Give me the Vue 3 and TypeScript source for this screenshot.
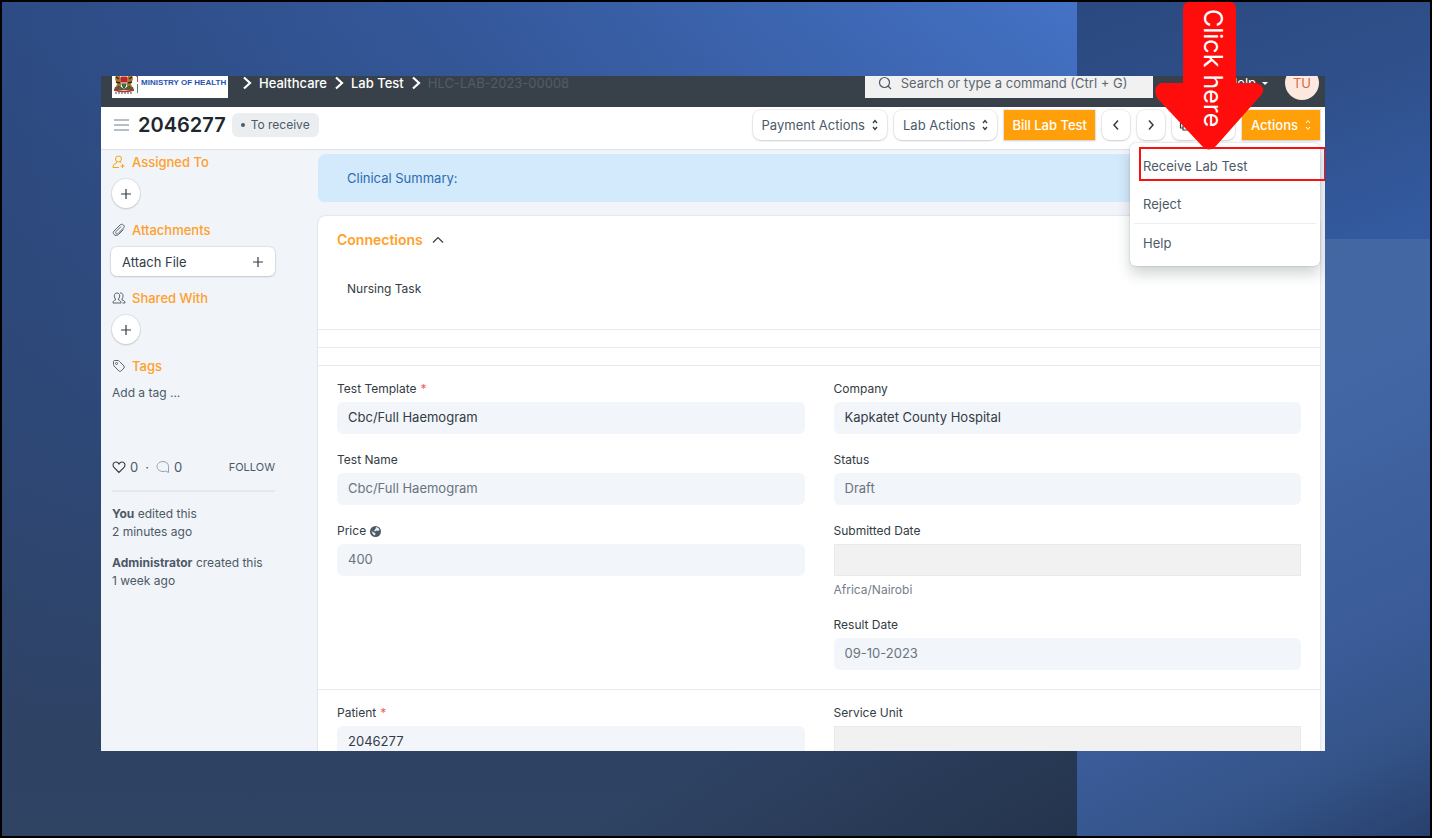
<script setup lang="ts">
import { ref } from 'vue'

interface Field {
  id: string
  label: string
  value: string
  required?: boolean
  muted?: boolean
  blank?: boolean
  globe?: boolean
  help?: string
}

const crumbs = ['Healthcare', 'Lab Test']
const menuOpen = ref(true)

const leftFields: Field[] = [
  { id: 'template', label: 'Test Template', value: 'Cbc/Full Haemogram', required: true },
  { id: 'name', label: 'Test Name', value: 'Cbc/Full Haemogram', muted: true },
  { id: 'price', label: 'Price', value: '400', muted: true, globe: true },
]
const rightFields: Field[] = [
  { id: 'company', label: 'Company', value: 'Kapkatet County Hospital' },
  { id: 'status', label: 'Status', value: 'Draft', muted: true },
  { id: 'submitted', label: 'Submitted Date', value: '', blank: true, help: 'Africa/Nairobi' },
  { id: 'result', label: 'Result Date', value: '09-10-2023', muted: true },
]
const patientFields: Field[] = [{ id: 'patient', label: 'Patient', value: '2046277', required: true }]
const unitFields: Field[] = [{ id: 'unit', label: 'Service Unit', value: '', blank: true }]

const sections: Field[][][] = [
  [leftFields, rightFields],
  [patientFields, unitFields],
]
</script>

<template>
  <div class="slide">
    <div class="panel-left"></div>
    <div class="panel-top"></div>
    <div class="panel-side"></div>

    <div class="window">
      <header class="navbar">
        <div class="nav-inner">
          <a class="brand" href="#">
            <svg class="crest" width="27" height="34" viewBox="0 0 27 34" aria-hidden="true">
              <path d="M4 12 L7 9 L8 14 L10 18 L9 24 L6 28 L3 28 L5 22 L3 17 Z" fill="#a87a35" />
              <path d="M20 12 L17 9 L16 14 L14 18 L15 24 L18 28 L21 28 L19 22 L21 17 Z" fill="#a87a35" />
              <path d="M4 15 L7 17 M4 20 L8 21 M6 24 L8 26 M20 15 L17 17 M20 20 L16 21 M18 24 L16 26" stroke="#3a2413" stroke-width="1.500" />
              <path d="M12 8 C16 12 16 22 12 27 C8 22 8 12 12 8" fill="#181818" />
              <path d="M9 14 H15 V21 H9 Z" fill="#c3222b" />
              <path d="M9 14 H15 M9 21 H15" stroke="#fff" stroke-width="1" />
              <path d="M10 22 H14 L12 27 Z" fill="#2f7a3d" />
              <path d="M3 25 L8 24 L12 27 L16 24 L21 25 L22 28 H2 Z" fill="#5c5b35" />
              <path d="M2 28 Q12 31 22 28" fill="none" stroke="#b8322e" stroke-width="1.500" />
              <path d="M3 31 H21" stroke="#444" stroke-width="1" stroke-dasharray="2 1" />
              <path d="M25 4 V15" stroke="#222" stroke-width="1" />
              <path d="M25.500 13 V20" stroke="#e0383e" stroke-width="1" />
              <path d="M25.500 22 V31" stroke="#3c9a55" stroke-width="1" />
            </svg>
            <span>MINISTRY OF HEALTH</span>
          </a>
          <nav class="crumbs" aria-label="Breadcrumb">
            <template v-for="c in crumbs" :key="c">
              <svg width="10" height="14" viewBox="0 0 10 14" aria-hidden="true"><path d="M2 1.500 L8 7 L2 12.500" fill="none" stroke="#fff" stroke-width="2.200" /></svg>
              <a href="#">{{ c }}</a>
            </template>
            <svg width="10" height="14" viewBox="0 0 10 14" aria-hidden="true"><path d="M2 1.500 L8 7 L2 12.500" fill="none" stroke="#fff" stroke-width="2.200" /></svg>
            <span class="current">HLC-LAB-2023-00008</span>
          </nav>
          <label class="search">
            <svg width="14" height="14" viewBox="0 0 14 14" aria-hidden="true"><circle cx="6.500" cy="6.500" r="5" fill="none" stroke="#4c5a67" stroke-width="1.200" /><path d="M10 10 L13 13" stroke="#4c5a67" stroke-width="1.200" /></svg>
            <input type="text" placeholder="Search or type a command (Ctrl + G)" aria-label="Search or type a command" />
          </label>
          <button class="help">Help <i class="caret"></i></button>
          <span class="avatar">TU</span>
        </div>
      </header>

      <div class="page-head">
        <button class="burger" aria-label="Toggle sidebar"><i></i><i></i><i></i></button>
        <h1>2046277</h1>
        <span class="pill"><i></i>To receive</span>
        <div class="actions">
          <button v-for="b in ['Payment Actions', 'Lab Actions']" :key="b" class="btn">
            {{ b }}
            <svg width="6" height="12" viewBox="0 0 6 12" aria-hidden="true"><path d="M1 4 L3 1.500 L5 4 M1 8 L3 10.500 L5 8" fill="none" stroke="#333c44" stroke-width="1.300" /></svg>
          </button>
          <button class="btn primary">Bill Lab Test</button>
          <button class="btn icon" aria-label="Previous"><svg width="8" height="12" viewBox="0 0 8 12"><path d="M6 1.500 L2 6 L6 10.500" fill="none" stroke="#333c44" stroke-width="1.500" /></svg></button>
          <button class="btn icon" aria-label="Next"><svg width="8" height="12" viewBox="0 0 8 12"><path d="M2 1.500 L6 6 L2 10.500" fill="none" stroke="#333c44" stroke-width="1.500" /></svg></button>
          <button class="btn icon" aria-label="Print"><svg width="14" height="12" viewBox="0 0 14 12"><path d="M4 4 V1 H10 V4 M4 9 H1.500 V4.500 H12.500 V9 H10 M4 7 H10 V11 H4 Z" fill="none" stroke="#333c44" stroke-width="1.200" /></svg></button>
          <button class="btn icon" aria-label="More"><svg width="14" height="4" viewBox="0 0 14 4" fill="#333c44"><circle cx="2" cy="2" r="1" /><circle cx="7" cy="2" r="1" /><circle cx="12" cy="2" r="1" /></svg></button>
          <div class="menu-anchor">
            <button class="btn primary" aria-haspopup="menu" :aria-expanded="menuOpen" @click="menuOpen = !menuOpen">
              Actions
              <svg width="6" height="12" viewBox="0 0 6 12" aria-hidden="true"><path d="M1 4 L3 1.500 L5 4 M1 8 L3 10.500 L5 8" fill="none" stroke="#fff" stroke-width="1" /></svg>
            </button>
            <div v-if="menuOpen" class="menu">
              <button class="marked">Receive Lab Test</button>
              <button>Reject</button>
              <hr />
              <button>Help</button>
            </div>
          </div>
        </div>
      </div>

      <div class="body">
        <aside>
          <section class="side-group">
            <h2>
              <svg width="14" height="14" viewBox="0 0 14 14" fill="none" stroke="#ffa00a"><circle cx="6.500" cy="4" r="3" /><path d="M4.500 7 L4 8.500 C2 9 1 10 1 12.500 H7 M8.500 7 L9 8 M10.500 9 V13 M8.500 11 H12.500" /></svg>
              Assigned To
            </h2>
            <button class="round" aria-label="Assign"><svg width="12" height="12" viewBox="0 0 12 12"><path d="M6 1 V11 M1 6 H11" stroke="#333c44" stroke-width="1.200" /></svg></button>
          </section>
          <section class="side-group">
            <h2>
              <svg width="14" height="14" viewBox="0 0 14 14" fill="none" stroke="#5a6570"><path d="M11.500 6.500 L6.500 11.500 C5 13 3 12.500 2 11.500 C1 10.500 1 9 2 8 L8 2 C9 1 10.500 1 11.500 2 C12.500 3 12.500 4 11.500 5 L6 10.500 C5.500 11 4.500 11 4 10.500 C3.500 10 3.500 9 4 8.500 L9 3.500" /></svg>
              Attachments
            </h2>
            <button class="attach">Attach File <svg width="12" height="12" viewBox="0 0 12 12"><path d="M6 1 V11 M1 6 H11" stroke="#333c44" stroke-width="1.200" /></svg></button>
          </section>
          <section class="side-group">
            <h2>
              <svg width="14" height="14" viewBox="0 0 14 14" fill="none" stroke="#5a6570"><path d="M1 12 C1 10 2 9.500 3.500 9 V8 C1.500 5.500 2 2 5 2 C8 2 8.500 5.500 6.500 8 V9 C8 9.500 9 10 9 12 Z M8 2 C11 1.500 12 5 10 8 V9 C12 9.500 13 10 13 12 H10.500" /></svg>
              Shared With
            </h2>
            <button class="round" aria-label="Share"><svg width="12" height="12" viewBox="0 0 12 12"><path d="M6 1 V11 M1 6 H11" stroke="#333c44" stroke-width="1.200" /></svg></button>
          </section>
          <section class="side-group tags">
            <h2>
              <svg width="14" height="14" viewBox="0 0 14 14" fill="none" stroke="#5a6570"><path d="M1.500 2.500 C1.500 2 2 1.500 2.500 1.500 H6 C6.500 1.500 7 2 7.500 2.500 L12 7 C12.500 7.500 12.500 8.500 12 9 L9 12 C8.500 12.500 7.500 12.500 7 12 L2 7 C1.500 6.500 1.500 6 1.500 5.500 Z" /><circle cx="4.500" cy="4.500" r="1" /></svg>
              Tags
            </h2>
            <button class="plain">Add a tag ...</button>
          </section>
          <div class="stats">
            <svg width="14" height="14" viewBox="0 0 14 14" fill="none" stroke="#333c44" stroke-width="1.100"><path d="M7 12.500 L2 7.500 C0 5 1.500 2 4 2 C5.500 2 6.500 3 7 4 C7.500 3 8.500 2 10 2 C12.500 2 14 5 12 7.500 Z" /></svg>
            <span>0</span><span class="dot">·</span>
            <svg width="14" height="14" viewBox="0 0 14 14" fill="none" stroke="#98a1a9"><path d="M12.500 12.500 V6.500 C12.500 3.500 10 1.500 7 1.500 C4 1.500 1 3.500 1 6.500 C1 9.500 4 11.500 7 11.500 C8 11.500 9 11.500 9.500 11 Z" /></svg>
            <span>0</span>
            <button class="follow">FOLLOW</button>
          </div>
          <p><b>You</b> edited this<br />2 minutes ago</p>
          <p><b>Administrator</b> created this<br />1 week ago</p>
        </aside>

        <main>
          <div class="summary">Clinical Summary:</div>
          <div class="card">
            <section class="connections">
              <button class="section-title">
                Connections
                <svg width="12" height="8" viewBox="0 0 12 8" aria-hidden="true"><path d="M1 6.500 L6 1.500 L11 6.500" fill="none" stroke="#333c44" stroke-width="1.200" /></svg>
              </button>
              <a class="task" href="#">Nursing Task</a>
            </section>
            <div class="strip"></div>
            <div class="strip"></div>
            <section v-for="(cols, s) in sections" :key="s" class="form">
              <div v-for="(col, c) in cols" :key="c" class="column">
                <div v-for="f in col" :key="f.id" class="field">
                  <label :for="f.id">
                    {{ f.label }} <span v-if="f.required" class="req">*</span>
                    <svg v-if="f.globe" width="11" height="11" viewBox="0 0 11 11" aria-hidden="true"><circle cx="5.500" cy="5.500" r="5.500" fill="#4c5a67" /><path d="M6 1 L8.500 2 L9.500 4 L8 5 L6.500 4.500 L5 5.500 L4 4.500 L5.500 3 Z M1.500 5 L4 6.500 L5.500 7.500 L5 9.500 L3 8.500 Z" fill="#e8ecef" /></svg>
                  </label>
                  <input :id="f.id" type="text" :value="f.value" readonly :class="{ muted: f.muted, blank: f.blank }" />
                  <small v-if="f.help">{{ f.help }}</small>
                </div>
              </div>
            </section>
          </div>
        </main>
      </div>
    </div>

    <div class="callout">
      <svg width="108" height="150" viewBox="0 0 108 150" aria-hidden="true">
        <path d="M34 0 H75 Q81 0 81 7 V81 H101 Q111 84 107 92 L61 144 Q54 151 47 144 L2 96 Q-3 85 6 81 H28 V7 Q28 0 34 0 Z" fill="#ff0d0d" />
      </svg>
      <span>Click here</span>
    </div>
  </div>
</template>

<style>
body {
  margin: 0;
}
</style>

<style scoped>
* {
  box-sizing: border-box;
}
.slide {
  position: relative;
  display: flex;
  height: 100vh;
  padding: 74px 105px 85px 99px;
  border: 2px solid #000;
  overflow: hidden;
  background: #2d4b83;
  font-family: Inter, "Liberation Sans", sans-serif;
  font-size: 13px;
  line-height: 18px;
  color: #4c5a67;
}
.panel-left,
.panel-top,
.panel-side {
  position: absolute;
}
.panel-left {
  inset: 0 353px 0 0;
  background:
    linear-gradient(150deg, rgba(35, 50, 74, 0) 80%, rgba(35, 50, 74, 0.9) 100%),
    linear-gradient(180deg, rgba(45, 66, 100, 0) 0%, rgba(45, 66, 100, 0.45) 50%, #2e4264 88%, #2f4363 100%),
    linear-gradient(90deg, #2d4b84 0%, #35599d 45%, #4472c6 100%);
}
.panel-top {
  top: 0;
  right: 0;
  width: 353px;
  height: 237px;
  background: linear-gradient(160deg, #2b4980 0%, #2f508b 50%, #345ba2 100%);
}
.panel-side {
  top: 237px;
  right: 0;
  bottom: 0;
  width: 353px;
  background: linear-gradient(155deg, #4568a0 0%, #4267a4 35%, #3a5b98 70%, #345489 85%, #28406d 100%);
}
button {
  border: 0;
  padding: 0;
  background: none;
  font: inherit;
  color: inherit;
  cursor: pointer;
}
a {
  color: inherit;
  text-decoration: none;
}
svg {
  flex: none;
}
.window {
  position: relative;
  display: flex;
  flex: 1;
  flex-direction: column;
  min-width: 0;
  overflow: hidden;
  background: #f1f4f9;
}
.navbar {
  display: flex;
  flex: none;
  align-items: flex-end;
  height: 31px;
  overflow: hidden;
  background: #384149;
}
.nav-inner {
  display: flex;
  flex: 1;
  align-items: center;
  height: 48px;
  padding: 0 6px 0 11px;
}
.brand {
  display: flex;
  align-items: center;
  gap: 2px;
  width: 116px;
  height: 29px;
  background: #fff;
  color: #1f52b2;
  font: bold 8px/12px "Liberation Sans", Arial, sans-serif;
  white-space: nowrap;
}
.crest {
  margin-top: -9px;
}
.crumbs {
  display: flex;
  align-items: center;
  gap: 7px;
  padding-left: 14px;
  color: #fff;
  font-weight: 500;
}
.crumbs .current {
  color: #525c65;
  font-weight: 400;
}
.search {
  display: flex;
  align-items: center;
  gap: 9px;
  width: 288px;
  height: 29px;
  margin-left: auto;
  padding-left: 13px;
  background: #f1f1f1;
}
.search input {
  flex: 1;
  min-width: 0;
  border: 0;
  padding: 0;
  background: none;
  font: inherit;
  outline: 0;
}
.search input::placeholder {
  color: #5c6770;
  opacity: 1;
}
.help {
  display: flex;
  align-items: center;
  gap: 6px;
  margin-left: 75px;
  color: #fff;
}
.caret {
  border: 3px solid transparent;
  border-top-color: #fff;
  border-bottom: 0;
}
.avatar {
  width: 34px;
  height: 34px;
  margin-left: 17px;
  border-radius: 50%;
  background: #fde8df;
  color: #d8683f;
  line-height: 34px;
  text-align: center;
}
.page-head {
  position: relative;
  z-index: 2;
  display: flex;
  flex: none;
  align-items: center;
  height: 43px;
  padding: 0 5px 6px 13px;
  border-bottom: 1px solid #dfe3e8;
  background: #fff;
}
.burger {
  display: grid;
  gap: 3px;
  width: 15px;
}
.burger i {
  height: 2px;
  background: #b7bfc6;
}
h1 {
  margin: 0 6px 0 9px;
  color: #1f272e;
  font-size: 20px;
  font-weight: 600;
  line-height: 28px;
}
.pill {
  display: flex;
  align-items: center;
  gap: 6px;
  height: 24px;
  padding: 0 9px;
  border-radius: 6px;
  background: #ebeef0;
  font-size: 12px;
}
.pill i {
  width: 4px;
  height: 4px;
  border-radius: 50%;
  background: #4c5a67;
}
.actions {
  display: flex;
  gap: 7px;
  margin-left: auto;
}
.btn {
  display: flex;
  align-items: center;
  justify-content: center;
  gap: 7px;
  height: 30px;
  padding: 0 9px;
  border-radius: 8px;
  background: #fff;
  box-shadow: 0 0 1px 1px rgba(25, 39, 52, 0.08), 0 1px 2px rgba(25, 39, 52, 0.15);
  white-space: nowrap;
}
.btn.primary {
  min-width: 78px;
  padding: 0 8px;
  border-radius: 0;
  background: #ffa00a;
  color: #fff;
  font-weight: 500;
}
.btn.icon {
  width: 28px;
  padding: 0;
}
.menu-anchor {
  position: relative;
}
.menu {
  position: absolute;
  top: 33px;
  right: 0;
  width: 190px;
  padding: 4px;
  border-radius: 6px;
  background: #fff;
  box-shadow: 0 0 2px rgba(25, 39, 52, 0.25), 0 8px 14px rgba(25, 39, 52, 0.2);
}
.menu button {
  display: block;
  width: 100%;
  height: 38px;
  padding-left: 9px;
  text-align: left;
}
.menu .marked {
  width: 187px;
  height: 34px;
  margin: 0 0 4px 5px;
  border: 2px solid #fb1010;
  padding: 4px 0 0 2px;
}
.menu hr {
  height: 1px;
  margin: 0;
  border: 0;
  background: #ebeef2;
}
.body {
  display: grid;
  flex: 1;
  grid-template-columns: 164px minmax(0, 1fr);
  column-gap: 43px;
  min-height: 0;
  padding: 4px 5px 0 10px;
}
.side-group {
  height: 68px;
}
.side-group.tags {
  height: 98px;
}
h2 {
  display: flex;
  align-items: center;
  gap: 6px;
  height: 16px;
  margin: 0 0 9px;
  padding-left: 1px;
  color: #ffa02a;
  font-size: 13px;
  font-weight: 500;
}
.round {
  display: grid;
  place-items: center;
  width: 28px;
  height: 29px;
  margin-left: 1px;
  border-radius: 50%;
  background: #fff;
  box-shadow: 0 0 1px 1px rgba(25, 39, 52, 0.08), 0 1px 2px rgba(25, 39, 52, 0.15);
}
.attach {
  display: flex;
  align-items: center;
  justify-content: space-between;
  width: 100%;
  height: 29px;
  padding: 0 11px;
  border-radius: 6px;
  background: #fff;
  box-shadow: 0 0 1px 1px rgba(25, 39, 52, 0.08), 0 1px 2px rgba(25, 39, 52, 0.15);
  color: #333c44;
}
.plain {
  padding: 1px;
  font-size: 12px;
}
.stats {
  display: flex;
  align-items: center;
  gap: 4px;
  height: 36px;
  margin: 0 0 13px 1px;
  padding-bottom: 12px;
  border-bottom: 2px solid #e5e9ee;
}
.stats .dot {
  padding: 0 3px;
}
.follow {
  margin-left: auto;
  font-size: 11px;
}
p {
  margin: 0 0 13px 1px;
  font-size: 12px;
}
.summary {
  height: 48px;
  padding: 0 29px;
  border-radius: 8px 8px 6px 6px;
  background: #d3e9fc;
  color: #2c6cb0;
  line-height: 48px;
}
.card {
  margin-top: 14px;
  border-radius: 8px 8px 0 0;
  background: #fff;
  box-shadow: 0 0 2px rgba(25, 39, 52, 0.2);
}
.connections {
  display: grid;
  justify-items: start;
  align-content: start;
  gap: 31px;
  height: 113px;
  padding: 15px 19px;
}
.section-title {
  display: flex;
  align-items: center;
  gap: 9px;
  color: #ffa02a;
  font-size: 14px;
  font-weight: 600;
}
.task {
  padding-left: 10px;
  color: #333c44;
  font-size: 12px;
}
.strip {
  height: 18px;
  border-top: 1px solid #e8ecf2;
}
.form {
  display: grid;
  grid-template-columns: 1fr 1fr;
  column-gap: 29px;
  padding: 15px 19px 2px;
  border-top: 1px solid #e8ecf2;
}
.field {
  margin-bottom: 17px;
}
.field label {
  display: flex;
  align-items: center;
  gap: 4px;
  height: 16px;
  margin-bottom: 5px;
  color: #333c44;
  font-size: 12px;
}
.field + .field {
  margin-top: 18px;
}
.req {
  color: #f25c5c;
}
.field input {
  display: block;
  width: 100%;
  height: 32px;
  border: 0;
  border-radius: 6px;
  padding: 0 11px 2px;
  background: #f2f5fa;
  color: #333c44;
  font: inherit;
  outline: 0;
}
.field input.muted {
  color: #69747e;
}
.field input.blank {
  border: 1px solid #e6ebf2;
  border-radius: 0;
  background: #f1f1f1;
}
small {
  display: block;
  padding-top: 5px;
  color: #75808a;
  font-size: 12px;
}
.callout {
  position: absolute;
  z-index: 3;
  top: 0;
  right: 167px;
  width: 108px;
  height: 150px;
}
.callout span {
  position: absolute;
  top: 7px;
  left: 42px;
  color: #fff;
  font-size: 25px;
  line-height: 32px;
  white-space: nowrap;
  writing-mode: vertical-rl;
}
</style>
